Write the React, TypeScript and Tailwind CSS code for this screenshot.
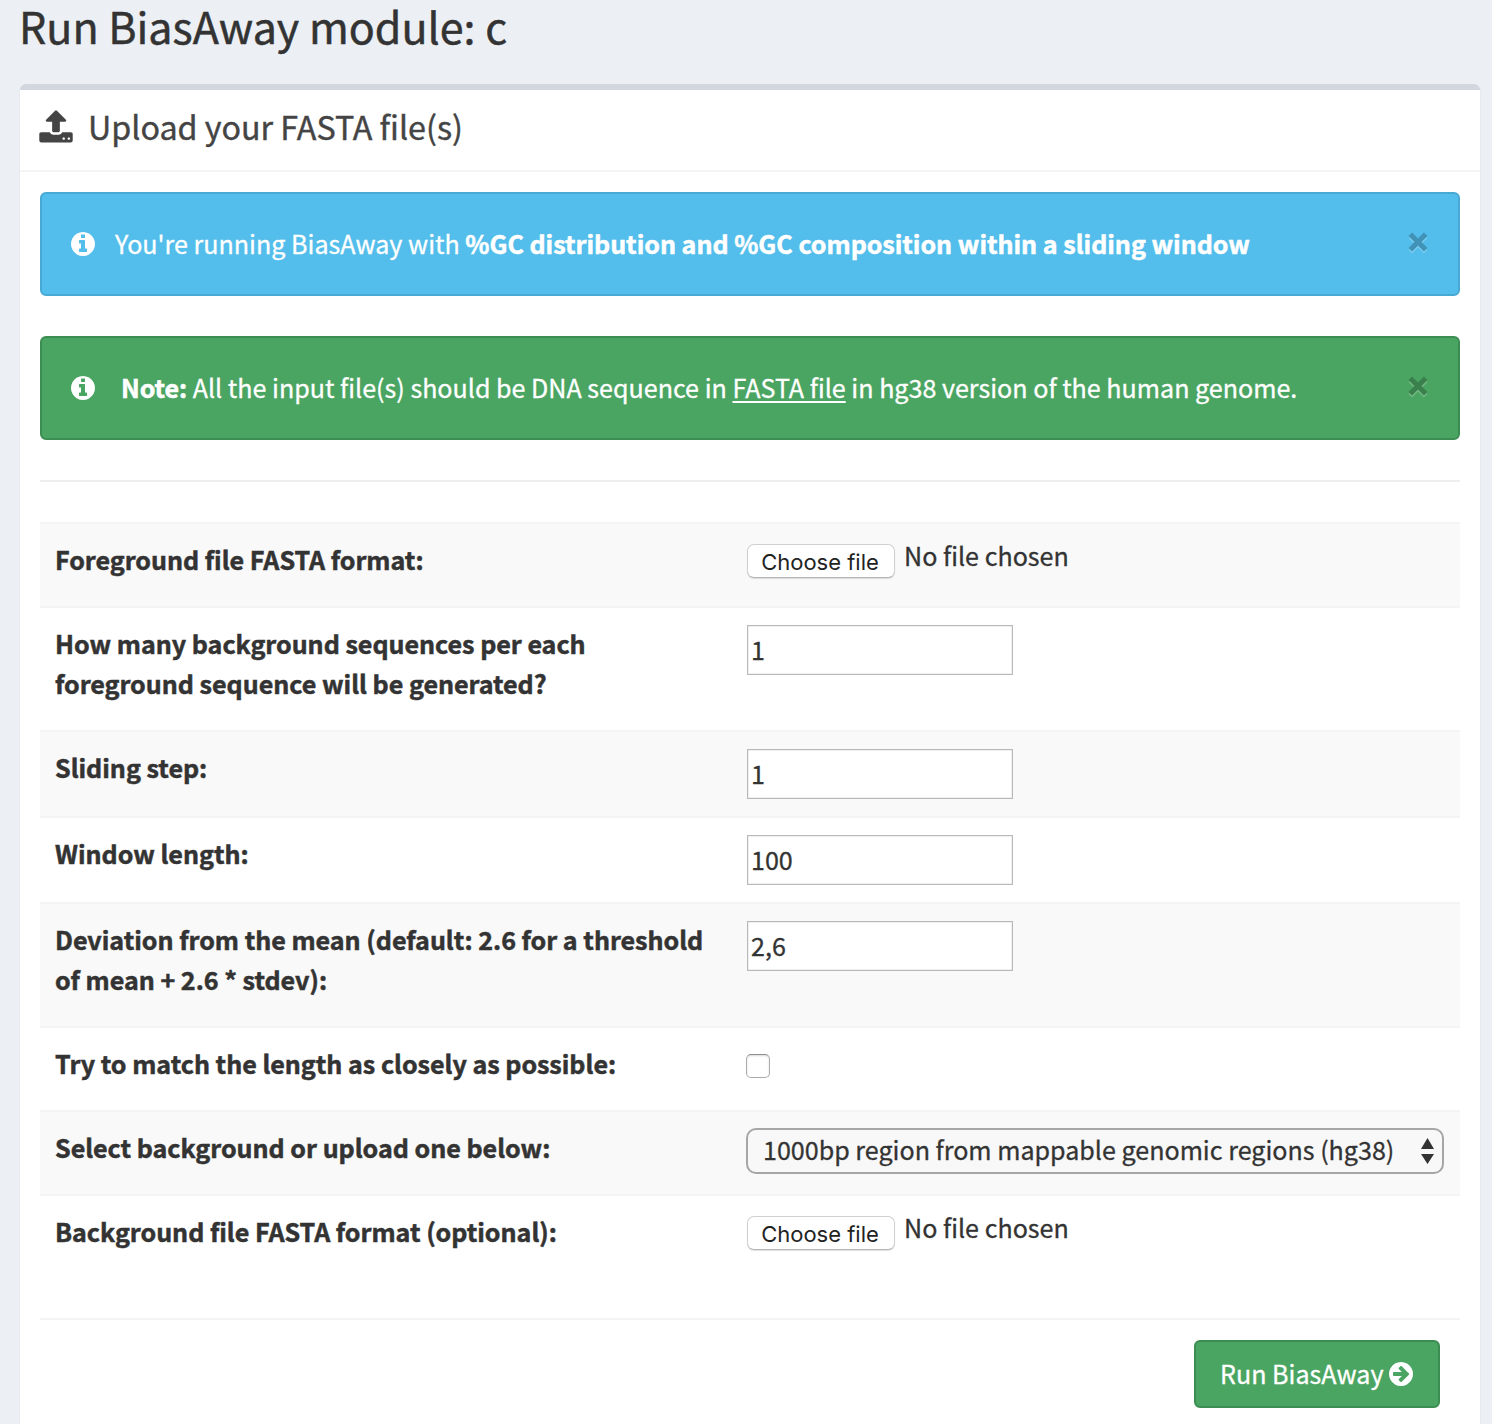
import React from "react";

function Svg({ d, className }: { d: string; className: string }) {
  return (
    <svg viewBox="0 0 1792 1792" fill="currentColor" className={className}>
      <path d={d} />
    </svg>
  );
}

const CIRCLE =
  "M1664 896q0 209-103 385.5t-279.5 279.5-385.5 103-385.5-103-279.5-279.5-103-385.5 103-385.5 279.5-279.5 385.5-103 385.5 103 279.5 279.5 103 385.5z";
const UPLOAD =
  "M1344 1472q0-26-19-45t-45-19-45 19-19 45 19 45 45 19 45-19 19-45zm256 0q0-26-19-45t-45-19-45 19-19 45 19 45 45 19 45-19 19-45zm128-224v320q0 40-28 68t-68 28h-1472q-40 0-68-28t-28-68v-320q0-40 28-68t68-28h427q21 56 70.5 92t110.5 36h256q61 0 110.5-36t70.5-92h427q40 0 68 28t28 68zm-325-648q-17 40-59 40h-256v448q0 26-19 45t-45 19h-256q-26 0-45-19t-19-45v-448h-256q-42 0-59-40-17-39 14-69l448-448q18-19 45-19t45 19l448 448q31 30 14 69z";
const INFO =
  "M1152 1376v-160q0-14-9-23t-23-9h-96v-512q0-14-9-23t-23-9h-320q-14 0-23 9t-9 23v160q0 14 9 23t23 9h96v320h-96q-14 0-23 9t-9 23v160q0 14 9 23t23 9h448q14 0 23-9t9-23zm-128-896v-160q0-14-9-23t-23-9h-192q-14 0-23 9t-9 23v160q0 14 9 23t23 9h192q14 0 23-9t9-23z" +
  CIRCLE;
const ARROW =
  "M1413 896q0-27-18-45l-91-91-362-362q-18-18-45-18t-45 18l-91 91q-18 18-18 45t18 45l189 189h-502q-26 0-45 19t-19 45v128q0 26 19 45t45 19h502l-189 189q-19 19-19 45t19 45l91 91q18 18 45 18t45-18l362-362 91-91q18-18 18-45z" +
  CIRCLE;

function Close() {
  return (
    <button aria-label="Close" className="ml-auto mr-[30px] mt-[38px] h-[22px] w-[20px] opacity-[0.22]">
      <svg viewBox="0 0 20 22" className="block h-[22px] w-[20px]" fill="none" strokeWidth="5">
        <path d="M2.3 4.3 17.7 19.7M17.7 4.3 2.3 19.7" stroke="#fff" />
        <path d="M2.3 2.3 17.7 17.7M17.7 2.3 2.3 17.7" stroke="#000" />
      </svg>
    </button>
  );
}

function Row({ label, striped, height, children }: { label: React.ReactNode; striped?: boolean; height: string; children: React.ReactNode }) {
  return (
    <div className={`flex border-t-2 border-[#f4f4f4] ${height} ${striped ? "bg-[#f9f9f9]" : ""}`}>
      <div className="w-[691px] shrink-0 whitespace-nowrap pl-[15px] pt-[15px] font-bold tracking-[-0.02px] [-webkit-text-stroke:0.5px]">{label}</div>
      <div className="pl-[15px]">{children}</div>
    </div>
  );
}

function FileInput() {
  return (
    <div className="flex pt-[20px]">
      <button className="ml-px h-[34px] w-[148px] rounded-[7px] border border-[#d0d0d0] border-b-[#b5b5b5] bg-white pr-[2px] font-[Inter] text-[22px] leading-[34px] text-[#222] shadow-[0_1px_1px_rgba(0,0,0,0.12)] [-webkit-text-stroke:0px]">
        Choose file
      </button>
      <span className="-mt-[9px] ml-[9px]">No file chosen</span>
    </div>
  );
}

function TextInput({ value }: { value: string }) {
  return (
    <input
      defaultValue={value}
      className="ml-px mt-[17px] block h-[50px] w-[266px] border border-[#b9b9b9] bg-white pb-[3px] pl-[3px] leading-[40px] shadow-[inset_0_0_0_1px_#efefef] outline-none"
    />
  );
}

export default function App() {
  return (
    <div className="h-[1424px] overflow-hidden bg-[#ecf0f5] px-5 font-['Noto_Sans_CJK_SC',sans-serif] text-[25.08px] leading-[40px] text-[#333] [-webkit-text-stroke:0.3px]">
      <h1 className="-ml-px h-[84px] whitespace-nowrap text-[43px] leading-[50px] [-webkit-text-stroke:0.5px]">
        Run BiasAway module: c
      </h1>
      <main className="-mr-2 h-[1400px] w-[1460px] rounded-t-[6px] border-t-[6px] border-[#d2d6de] bg-white shadow-[0_2px_2px_rgba(0,0,0,0.1)]">
        <header className="flex h-[82px] border-b-2 border-[#f4f4f4] pl-[18px] text-[#444]">
          <Svg d={UPLOAD} className="mt-[19px] h-[36px] w-[36px]" />
          <h2 className="ml-[14px] mt-[16px] whitespace-nowrap text-[32.25px] leading-[40px] [-webkit-text-stroke:0.4px]">
            Upload your FASTA file(s)
          </h2>
        </header>
        <div className="px-5 pt-5">
          <section className="flex h-[104px] rounded-[6px] border-2 border-[#47a9d4] bg-[#53bdeb] text-white">
            <Svg d={INFO} className="ml-[27px] mt-[36px] h-[28px] w-[28px] shrink-0" />
            <p className="ml-[18px] mt-[29px] whitespace-nowrap">
              <span>You're running BiasAway with </span>
              <b className="tracking-[-0.03px] [-webkit-text-stroke:0.5px]">%GC distribution and %GC composition within a sliding window</b>
            </p>
            <Close />
          </section>
          <section className="mt-10 flex h-[104px] rounded-[6px] border-2 border-[#3c8d51] bg-[#4ba562] text-white">
            <Svg d={INFO} className="ml-[27px] mt-[36px] h-[28px] w-[28px] shrink-0" />
            <p className="ml-[24px] mt-[29px] whitespace-nowrap">
              <b className="tracking-[-0.1px] [-webkit-text-stroke:0.5px]">Note:</b>
              <span> All the input file(s) should be DNA sequence in </span>
              <a className="underline decoration-2 underline-offset-[3px]">FASTA file</a>
              <span> in hg38 version of the human genome.</span>
            </p>
            <Close />
          </section>
          <hr className="mb-10 mt-10 border-t-2 border-[#eee]" />
          <Row striped height="h-[84px]" label="Foreground file FASTA format:">
            <FileInput />
          </Row>
          <Row height="h-[124px]" label={<>How many background sequences per each<br />foreground sequence will be generated?</>}>
            <TextInput value="1" />
          </Row>
          <Row striped height="h-[86px]" label="Sliding step:">
            <TextInput value="1" />
          </Row>
          <Row height="h-[86px]" label="Window length:">
            <TextInput value="100" />
          </Row>
          <Row striped height="h-[124px]" label={<>Deviation from the mean (default: 2.6 for a threshold<br />of mean + 2.6 * stdev):</>}>
            <TextInput value="2,6" />
          </Row>
          <Row height="h-[84px]" label="Try to match the length as closely as possible:">
            <input
              type="checkbox"
              className="mt-[26px] block h-[24px] w-[24px] appearance-none rounded-[5px] border border-[#ababab] border-t-[#8f8f8f] bg-white shadow-[inset_0_1px_2px_rgba(0,0,0,0.15)]"
            />
          </Row>
          <Row striped height="h-[84px]" label="Select background or upload one below:">
            <button className="mt-[16px] flex h-[46px] w-[698px] items-center whitespace-nowrap rounded-[10px] border-2 border-[#a6a6a6] bg-[#f8f8f8] pl-[15px] pr-[8px]">
              <span className="-mt-[4px]">1000bp region from mappable genomic regions (hg38)</span>
              <svg viewBox="0 0 13 26" className="ml-auto h-[26px] w-[13px]" fill="#333">
                <path d="M6.5 0 13 11H0zM6.5 26 0 16h13z" />
              </svg>
            </button>
          </Row>
          <Row height="h-[124px]" label="Background file FASTA format (optional):">
            <FileInput />
          </Row>
          <hr className="border-t-2 border-[#f4f4f4]" />
          <button className="ml-auto mr-5 mt-5 flex h-[68px] w-[246px] rounded-[6px] border-2 border-[#3c8d51] bg-[#4ba562] pl-[24px] text-white">
            <span className="mt-[11px] whitespace-nowrap">Run BiasAway</span>
            <Svg d={ARROW} className="ml-[4px] mt-[18px] h-[28px] w-[28px] shrink-0" />
          </button>
        </div>
      </main>
    </div>
  );
}
